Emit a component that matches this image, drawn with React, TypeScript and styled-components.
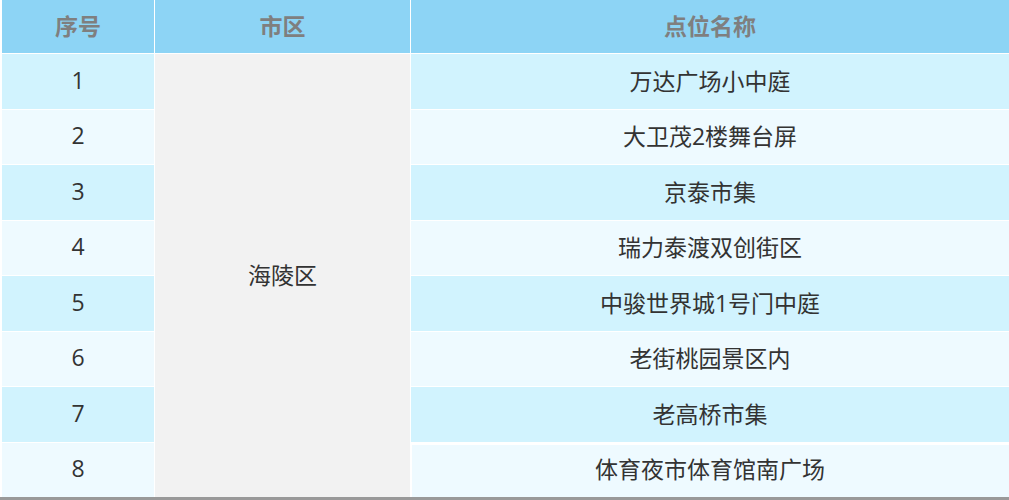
import React, { FC } from 'react';
import styled, { createGlobalStyle } from 'styled-components';

const GlobalStyle = createGlobalStyle`
  * {
    margin: 0;
    padding: 0;
    box-sizing: border-box;
  }
  body {
    background: #fff;
    font-family: "Open Sans", "Noto Sans CJK SC", sans-serif;
  }
`;

const Wrapper = styled.div`
  width: 1009px;
  height: 500px;
  padding-left: 2px;
  border-bottom: 3px solid #999;
  background: #fff;
`;

const Grid = styled.div`
  height: 497px;
  display: grid;
  grid-template-columns: 152px 255px 1fr;
  grid-template-rows: 53px repeat(8, 1fr);
  gap: 1px;
  background: #fff;
`;

const HeadCell = styled.div`
  background: #8dd4f5;
  color: #7f7f7f;
  font-size: 23px;
  font-weight: 700;
  padding-bottom: 3px;
  display: flex;
  align-items: center;
  justify-content: center;
`;

const Cell = styled.div<{ $odd: boolean; $mark?: boolean }>`
  background: ${(p) => (p.$odd ? '#d1f3fe' : '#eefaff')};
  color: #333;
  font-size: 23px;
  padding-bottom: 3px;
  display: flex;
  align-items: center;
  justify-content: center;
  box-shadow: ${(p) => (p.$mark ? 'inset 1px 2px 0 #fff' : 'none')};
`;

const DistrictCell = styled.div`
  grid-column: 2;
  grid-row: 2 / span 8;
  background: #f2f2f2;
  color: #333;
  font-size: 23px;
  padding-bottom: 4px;
  display: flex;
  align-items: center;
  justify-content: center;
`;

const places = [
  '万达广场小中庭',
  '大卫茂2楼舞台屏',
  '京泰市集',
  '瑞力泰渡双创街区',
  '中骏世界城1号门中庭',
  '老街桃园景区内',
  '老高桥市集',
  '体育夜市体育馆南广场',
];

const App: FC = () => (
  <>
    <GlobalStyle />
    <Wrapper>
      <Grid>
        <HeadCell>序号</HeadCell>
        <HeadCell>市区</HeadCell>
        <HeadCell>点位名称</HeadCell>
        <DistrictCell>海陵区</DistrictCell>
        {places.map((name, i) => (
          <React.Fragment key={name}>
            <Cell $odd={i % 2 === 0} style={{ gridColumn: 1, gridRow: i + 2 }}>
              {i + 1}
            </Cell>
            <Cell
              $odd={i % 2 === 0}
              $mark={i === places.length - 1}
              style={{ gridColumn: 3, gridRow: i + 2 }}
            >
              {name}
            </Cell>
          </React.Fragment>
        ))}
      </Grid>
    </Wrapper>
  </>
);

export default App;
